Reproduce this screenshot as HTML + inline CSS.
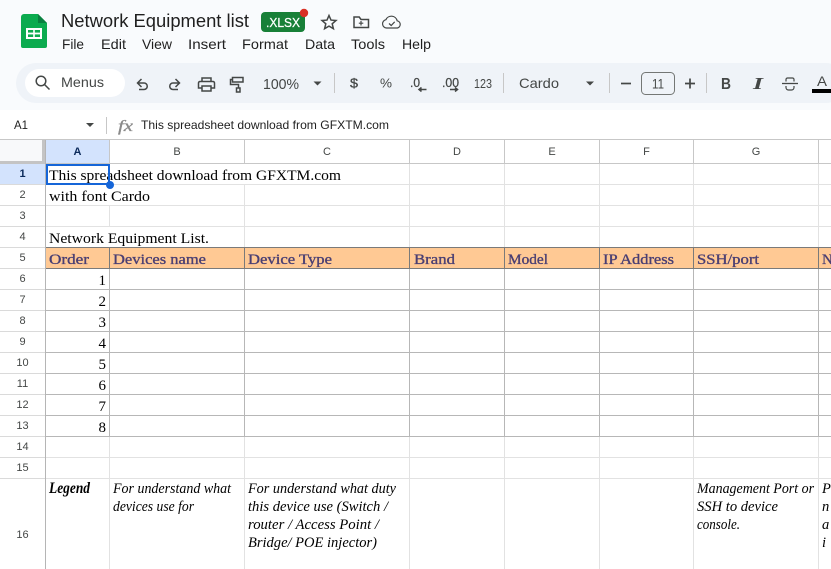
<!DOCTYPE html>
<html><head><meta charset="utf-8"><title>Network Equipment list</title>
<style>
html,body{margin:0;padding:0;background:#fff;width:831px;height:569px;overflow:hidden}
svg{display:block}
.u{font-family:"Liberation Sans",sans-serif;fill:#444746}
.m{font-family:"Liberation Sans",sans-serif;font-size:14px;fill:#1f1f1f}
.t{font-family:"Liberation Serif",serif;font-size:15px;fill:#000}
.o{font-family:"Liberation Serif",serif;font-size:15px;fill:#4a3f73;stroke:#4a3f73;stroke-width:.35px}
.i{font-family:"Liberation Serif",serif;font-size:14.5px;font-style:italic;fill:#000}
.n{font-family:"Liberation Serif",serif;font-size:15px;fill:#000;text-anchor:end}
.r{font-family:"Liberation Sans",sans-serif;font-size:11px;fill:#444746;text-anchor:middle}
.c{font-family:"Liberation Sans",sans-serif;font-size:11px;fill:#444746;text-anchor:middle}
.ic{fill:none;stroke:#444746;stroke-width:1.5px}
.ith{fill:none;stroke:#444746;stroke-width:1.2px}
</style></head>
<body>
<svg width="831" height="569" viewBox="0 0 831 569" xmlns="http://www.w3.org/2000/svg">
<rect width="831" height="110" fill="#f9fbfd"/>
<rect x="0" y="110" width="831" height="459" fill="#fff"/>

<!-- logo -->
<path d="M24 14H38L47 23V46a2 2 0 0 1-2 2H23a2 2 0 0 1-2-2V17a3 3 0 0 1 3-3z" fill="#0cab4f"/>
<path d="M38 14L47 23H38z" fill="#0a8040"/>
<rect x="26" y="28" width="16" height="11" fill="#fff"/>
<rect x="28" y="30" width="5.2" height="2.6" fill="#0cab4f"/>
<rect x="34.800" y="30" width="5.2" height="2.6" fill="#0cab4f"/>
<rect x="28" y="34.400" width="5.2" height="2.6" fill="#0cab4f"/>
<rect x="34.800" y="34.400" width="5.2" height="2.6" fill="#0cab4f"/>

<!-- title -->
<text x="61" y="27" font-family="Liberation Sans, sans-serif" font-size="18" fill="#1f1f1f" textLength="188" lengthAdjust="spacingAndGlyphs">Network Equipment list</text>
<rect x="261" y="12" width="44" height="20" rx="4" fill="#188038"/>
<text x="266" y="27" font-family="Liberation Sans, sans-serif" font-size="13" fill="#fff" stroke="#fff" stroke-width=".25" textLength="34" lengthAdjust="spacingAndGlyphs">.XLSX</text>
<circle cx="304" cy="13" r="4.2" fill="#d93025"/>
<path class="ic" d="M329 15.500l2 4.600 5 .4-3.800 3.300 1.200 4.900-4.400-2.600-4.400 2.600 1.200-4.900-3.800-3.300 5-.4z"/>
<path class="ic" d="M354 17v10.500h14.500V19.500h-7.500l-1.800-2.500h-5.200z"/>
<path class="ith" d="M361 21v4.500M358.800 23.200h4.500"/>
<path class="ith" d="M389 28h-2.500a4.200 4.200 0 0 1-.6-8.300 6 6 0 0 1 11.300 1.100 3.700 3.700 0 0 1 .3 7.200z"/>
<path class="ith" d="M389 23.500l2.200 2 3.500-3.700"/>

<!-- menu -->
<text class="m" x="62" y="49" textLength="22" lengthAdjust="spacingAndGlyphs">File</text>
<text class="m" x="101" y="49" textLength="25" lengthAdjust="spacingAndGlyphs">Edit</text>
<text class="m" x="142" y="49" textLength="30" lengthAdjust="spacingAndGlyphs">View</text>
<text class="m" x="188" y="49" textLength="38" lengthAdjust="spacingAndGlyphs">Insert</text>
<text class="m" x="242" y="49" textLength="46" lengthAdjust="spacingAndGlyphs">Format</text>
<text class="m" x="305" y="49" textLength="30" lengthAdjust="spacingAndGlyphs">Data</text>
<text class="m" x="351" y="49" textLength="34" lengthAdjust="spacingAndGlyphs">Tools</text>
<text class="m" x="402" y="49" textLength="29" lengthAdjust="spacingAndGlyphs">Help</text>

<!-- toolbar -->
<rect x="16" y="63" width="830" height="40" rx="20" fill="#eff3f8"/>
<rect x="25" y="69" width="100" height="28" rx="14" fill="#fff"/>
<circle cx="41" cy="81" r="4.800" class="ic"/>
<path class="ic" d="M44.500 84.500L49.500 89.500"/>
<text class="u" x="61" y="87" font-size="14" textLength="43" lengthAdjust="spacingAndGlyphs">Menus</text>

<path class="ic" d="M141.500 79l-4 4 4 4M137.500 83h6.500a3.200 3.200 0 0 1 0 6.500h-5"/>
<path class="ic" d="M175.500 79l4 4-4 4M179.500 83h-6.500a3.200 3.200 0 0 0 0 6.500h5"/>
<path class="ic" d="M202 81.500v-3.500h9v3.500M202 88h-3.500v-5a1.500 1.500 0 0 1 1.500-1.500h13a1.500 1.500 0 0 1 1.500 1.500v5H211M202 86h9v5h-9z"/>
<path class="ic" d="M232.500 77.500h10.500v4.500h-10.500zM232.500 79.500h-2v5h8v3.500M236.500 88h3.500v4h-3.500z"/>
<text class="u" x="263" y="89" font-size="15" textLength="36" lengthAdjust="spacingAndGlyphs">100%</text>
<path d="M313.500 81.500h8l-4 4z" fill="#444746"/>
<rect x="334" y="73" width="1" height="20" fill="#c7c7c7"/>
<text class="u" x="350" y="87.500" font-size="13" stroke="#444746" stroke-width=".3" textLength="8" lengthAdjust="spacingAndGlyphs">$</text>
<text class="u" x="380" y="87.500" font-size="12.500" textLength="12" lengthAdjust="spacingAndGlyphs">%</text>
<text class="u" x="410" y="87" font-size="13" stroke="#444746" stroke-width=".25" textLength="10" lengthAdjust="spacingAndGlyphs">.0</text>
<path class="ic" d="M419 89.500h7.500M421.500 87.500l-2.500 2 2.500 2"/>
<text class="u" x="442" y="87" font-size="13" stroke="#444746" stroke-width=".25" textLength="17" lengthAdjust="spacingAndGlyphs">.00</text>
<path class="ic" d="M450 89.500h7.500M455 87.500l2.500 2-2.500 2"/>
<text class="u" x="474" y="88" font-size="13" textLength="18" lengthAdjust="spacingAndGlyphs">123</text>
<rect x="503" y="73" width="1" height="20" fill="#c7c7c7"/>
<text class="u" x="519" y="88" font-size="14" textLength="40" lengthAdjust="spacingAndGlyphs">Cardo</text>
<path d="M586 81.500h8l-4 4z" fill="#444746"/>
<rect x="609" y="73" width="1" height="20" fill="#c7c7c7"/>
<path d="M621 83.500h10" stroke="#444746" stroke-width="1.700"/>
<rect x="641.500" y="72.500" width="33" height="22" rx="4" fill="none" stroke="#747775" stroke-width="1"/>
<text class="u" x="652" y="88.500" font-size="14" textLength="12" lengthAdjust="spacingAndGlyphs">11</text>
<path d="M685 83.500h10M690 78.500v10" stroke="#444746" stroke-width="1.700"/>
<rect x="706" y="73" width="1" height="20" fill="#c7c7c7"/>
<text class="u" x="721" y="89" font-size="16" font-weight="bold" textLength="10" lengthAdjust="spacingAndGlyphs">B</text>
<text x="753" y="89" font-family="Liberation Serif, serif" font-size="17" font-weight="bold" font-style="italic" fill="#444746" textLength="10" lengthAdjust="spacingAndGlyphs">I</text>
<path d="M782 83.500h16" stroke="#444746" stroke-width="1.300"/>
<path class="ith" d="M786 81.500v-2a1.500 1.500 0 0 1 1.500-1.500h5a1.500 1.500 0 0 1 1.500 1.500v2M786 86v1.500a2.500 2.500 0 0 0 2.500 2.500h3a2.500 2.500 0 0 0 2.500-2.500V86"/>
<text class="u" x="817" y="86" font-size="14" textLength="10" lengthAdjust="spacingAndGlyphs">A</text>
<rect x="812" y="89" width="19" height="4" fill="#000"/>

<!-- formula bar -->
<text class="u" x="14" y="129" font-size="12" style="fill:#1f1f1f" textLength="14" lengthAdjust="spacingAndGlyphs">A1</text>
<path d="M86 123h8l-4 4z" fill="#444746"/>
<rect x="106" y="117" width="1" height="17" fill="#c7c7c7"/>
<text x="118" y="131" font-family="Liberation Serif, serif" font-size="16" font-style="italic" fill="#8a8a8a" stroke="#8a8a8a" stroke-width=".3" textLength="15" lengthAdjust="spacingAndGlyphs">fx</text>
<text class="u" x="141" y="129" font-size="12" style="fill:#1f1f1f" textLength="248" lengthAdjust="spacingAndGlyphs">This spreadsheet download from GFXTM.com</text>

<!-- grid header -->
<rect x="0" y="139" width="45" height="25" fill="#f8f9fa"/>
<rect x="46" y="139" width="64" height="25" fill="#d3e3fd"/>
<rect x="0" y="164" width="45" height="20" fill="#d3e3fd"/>
<rect x="0" y="139" width="831" height="1" fill="#c7c7c7"/>
<rect x="0" y="163" width="831" height="1" fill="#c7c7c7"/>
<rect x="42" y="140" width="3" height="23" fill="#c4c4c4"/>
<rect x="0" y="161" width="45" height="3" fill="#c4c4c4"/>
<g fill="#c7c7c7">
<rect x="109" y="140" width="1" height="23"/><rect x="244" y="140" width="1" height="23"/><rect x="409" y="140" width="1" height="23"/><rect x="504" y="140" width="1" height="23"/><rect x="599" y="140" width="1" height="23"/><rect x="693" y="140" width="1" height="23"/><rect x="818" y="140" width="1" height="23"/>
</g>
<text class="c" x="77.500" y="155" font-weight="bold" style="fill:#0b2a5b">A</text>
<text class="c" x="177" y="155">B</text>
<text class="c" x="327" y="155">C</text>
<text class="c" x="457" y="155">D</text>
<text class="c" x="552" y="155">E</text>
<text class="c" x="646.500" y="155">F</text>
<text class="c" x="756" y="155">G</text>

<!-- row header lines -->
<g fill="#dadada">
<rect x="0" y="184" width="45" height="1"/><rect x="0" y="205" width="45" height="1"/><rect x="0" y="226" width="45" height="1"/><rect x="0" y="247" width="45" height="1"/><rect x="0" y="268" width="45" height="1"/><rect x="0" y="289" width="45" height="1"/><rect x="0" y="310" width="45" height="1"/><rect x="0" y="331" width="45" height="1"/><rect x="0" y="352" width="45" height="1"/><rect x="0" y="373" width="45" height="1"/><rect x="0" y="394" width="45" height="1"/><rect x="0" y="415" width="45" height="1"/><rect x="0" y="436" width="45" height="1"/><rect x="0" y="457" width="45" height="1"/><rect x="0" y="478" width="45" height="1"/>
</g>
<rect x="45" y="140" width="1" height="429" fill="#b5b5b5"/>

<!-- light lines upper rows -->
<g fill="#e2e2e2">
<rect x="46" y="184" width="785" height="1"/><rect x="46" y="205" width="785" height="1"/><rect x="46" y="226" width="785" height="1"/>
<rect x="46" y="457" width="785" height="1"/><rect x="46" y="478" width="785" height="1"/>
<rect x="409" y="164" width="1" height="83"/><rect x="504" y="164" width="1" height="83"/><rect x="599" y="164" width="1" height="83"/><rect x="693" y="164" width="1" height="83"/><rect x="818" y="164" width="1" height="83"/>
<rect x="244" y="185" width="1" height="62"/>
<rect x="109" y="206" width="1" height="20"/>
<rect x="109" y="437" width="1" height="132"/><rect x="244" y="437" width="1" height="132"/><rect x="409" y="437" width="1" height="132"/><rect x="504" y="437" width="1" height="132"/><rect x="599" y="437" width="1" height="132"/><rect x="693" y="437" width="1" height="132"/><rect x="818" y="437" width="1" height="132"/>
</g>

<!-- table rows -->
<rect x="46" y="247" width="785" height="22" fill="#ffc994"/>
<g fill="#b7b7b7">
<rect x="46" y="289" width="785" height="1"/><rect x="46" y="310" width="785" height="1"/><rect x="46" y="331" width="785" height="1"/><rect x="46" y="352" width="785" height="1"/><rect x="46" y="373" width="785" height="1"/><rect x="46" y="394" width="785" height="1"/><rect x="46" y="415" width="785" height="1"/><rect x="46" y="436" width="785" height="1"/>
<rect x="109" y="269" width="1" height="168"/><rect x="244" y="269" width="1" height="168"/><rect x="409" y="269" width="1" height="168"/><rect x="504" y="269" width="1" height="168"/><rect x="599" y="269" width="1" height="168"/><rect x="693" y="269" width="1" height="168"/><rect x="818" y="269" width="1" height="168"/>
</g>
<g fill="#7a7a7a">
<rect x="46" y="247" width="785" height="1"/><rect x="46" y="268" width="785" height="1"/>
<rect x="109" y="247" width="1" height="22"/><rect x="244" y="247" width="1" height="22"/><rect x="409" y="247" width="1" height="22"/><rect x="504" y="247" width="1" height="22"/><rect x="599" y="247" width="1" height="22"/><rect x="693" y="247" width="1" height="22"/><rect x="818" y="247" width="1" height="22"/>
</g>

<!-- row numbers -->
<text class="r" x="22.500" y="177" font-weight="bold" style="fill:#0b2a5b">1</text>
<text class="r" x="22.500" y="198">2</text>
<text class="r" x="22.500" y="219">3</text>
<text class="r" x="22.500" y="240">4</text>
<text class="r" x="22.500" y="261">5</text>
<text class="r" x="22.500" y="282">6</text>
<text class="r" x="22.500" y="303">7</text>
<text class="r" x="22.500" y="324">8</text>
<text class="r" x="22.500" y="345">9</text>
<text class="r" x="22.500" y="366">10</text>
<text class="r" x="22.500" y="387">11</text>
<text class="r" x="22.500" y="408">12</text>
<text class="r" x="22.500" y="429">13</text>
<text class="r" x="22.500" y="450">14</text>
<text class="r" x="22.500" y="471">15</text>
<text class="r" x="22.500" y="538">16</text>

<!-- cell text -->
<text class="t" x="49" y="180" textLength="292" lengthAdjust="spacingAndGlyphs">This spreadsheet download from GFXTM.com</text>
<text class="t" x="49" y="201" textLength="101" lengthAdjust="spacingAndGlyphs">with font Cardo</text>
<text class="t" x="49" y="243" textLength="160" lengthAdjust="spacingAndGlyphs">Network Equipment List.</text>
<text class="o" x="49" y="264" textLength="40" lengthAdjust="spacingAndGlyphs">Order</text>
<text class="o" x="113" y="264" textLength="93" lengthAdjust="spacingAndGlyphs">Devices name</text>
<text class="o" x="248" y="264" textLength="84" lengthAdjust="spacingAndGlyphs">Device Type</text>
<text class="o" x="414" y="264" textLength="41" lengthAdjust="spacingAndGlyphs">Brand</text>
<text class="o" x="508" y="264" textLength="40" lengthAdjust="spacingAndGlyphs">Model</text>
<text class="o" x="603" y="264" textLength="71" lengthAdjust="spacingAndGlyphs">IP Address</text>
<text class="o" x="697" y="264" textLength="62" lengthAdjust="spacingAndGlyphs">SSH/port</text>
<text class="o" x="822" y="264">N</text>
<text class="n" x="106" y="285">1</text>
<text class="n" x="106" y="306">2</text>
<text class="n" x="106" y="327">3</text>
<text class="n" x="106" y="348">4</text>
<text class="n" x="106" y="369">5</text>
<text class="n" x="106" y="390">6</text>
<text class="n" x="106" y="411">7</text>
<text class="n" x="106" y="432">8</text>

<text class="i" x="49" y="493" textLength="41" lengthAdjust="spacingAndGlyphs" style="font-weight:bold;font-size:15.5px">Legend</text>
<text class="i" x="113" y="493" textLength="118" lengthAdjust="spacingAndGlyphs">For understand what</text>
<text class="i" x="113" y="511" textLength="81" lengthAdjust="spacingAndGlyphs">devices use for</text>
<text class="i" x="248" y="493" textLength="148" lengthAdjust="spacingAndGlyphs">For understand what duty</text>
<text class="i" x="248" y="511" textLength="140" lengthAdjust="spacingAndGlyphs">this device use (Switch /</text>
<text class="i" x="248" y="529" textLength="131" lengthAdjust="spacingAndGlyphs">router / Access Point /</text>
<text class="i" x="248" y="547" textLength="129" lengthAdjust="spacingAndGlyphs">Bridge/ POE injector)</text>
<text class="i" x="697" y="493" textLength="117" lengthAdjust="spacingAndGlyphs">Management Port or</text>
<text class="i" x="697" y="511" textLength="81" lengthAdjust="spacingAndGlyphs">SSH to device</text>
<text class="i" x="697" y="529" textLength="43" lengthAdjust="spacingAndGlyphs">console.</text>
<text class="i" x="822" y="493">P</text>
<text class="i" x="822" y="511">n</text>
<text class="i" x="822" y="529">a</text>
<text class="i" x="822" y="547">i</text>

<!-- selection -->
<rect x="47" y="165" width="62" height="19" fill="none" stroke="#1565d8" stroke-width="2"/>
<circle cx="110" cy="185" r="4" fill="#1565d8"/>
</svg>
</body></html>
